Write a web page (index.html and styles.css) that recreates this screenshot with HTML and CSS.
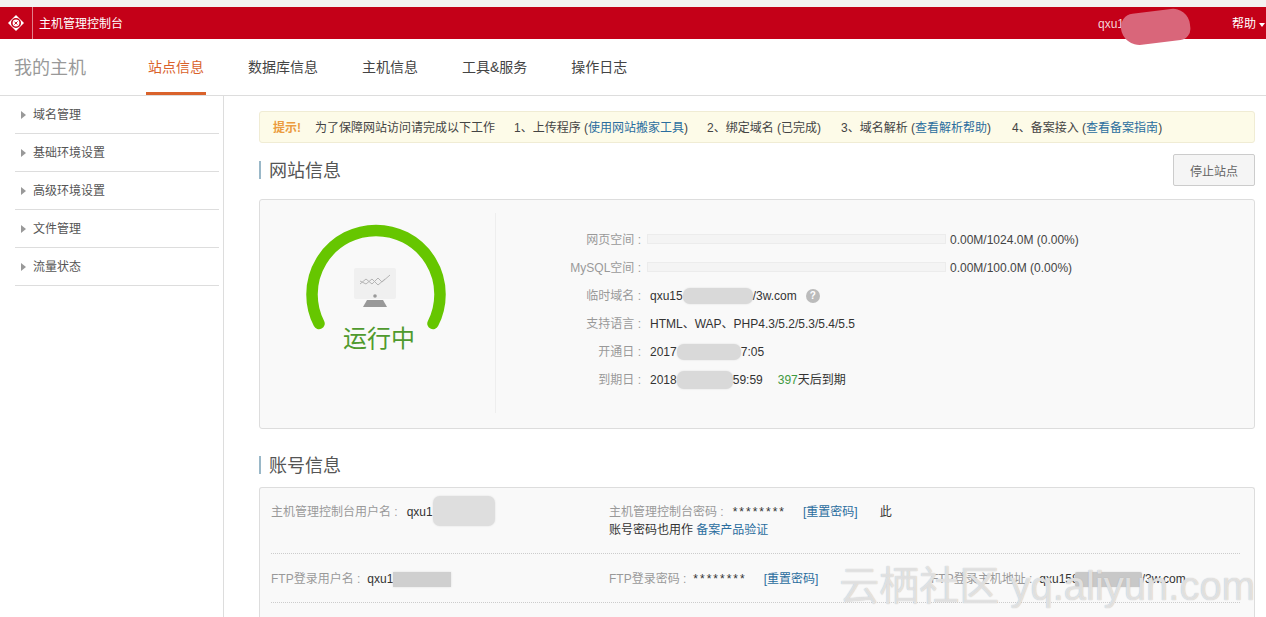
FILE: index.html
```html
<!DOCTYPE html>
<html lang="en">
<head>
	<meta charset="UTF-8">
	<title>主机管理控制台</title>
	<link rel="stylesheet" href="styles.css">
</head>
<body>
	<div class="topbar">
		<div class="logo">
			<svg width="16" height="16" viewBox="0 0 16 16">
				<path d="M8 0L16 8L8 16L0 8Z" fill="#fff"/>
				<circle cx="8" cy="8" r="4.2" fill="none" stroke="#c40018" stroke-width="1.6"/>
				<path d="M6.4 9.6L9.6 6.4M6.4 6.6L9.4 9.6" stroke="#c40018" stroke-width="1"/>
			</svg>
		</div>
		<div class="topbar-title">主机管理控制台</div>
		<div class="user">qxu1</div>
		<div class="help">帮助<i class="caret"></i></div>
		<div class="smudge"></div>
	</div>

	<div class="nav">
		<div class="nav-title">我的主机</div>
		<ul class="tabs">
			<li class="on">站点信息</li>
			<li>数据库信息</li>
			<li>主机信息</li>
			<li>工具&amp;服务</li>
			<li>操作日志</li>
		</ul>
	</div>

	<div class="wrap">
		<ul class="side">
			<li>域名管理</li>
			<li>基础环境设置</li>
			<li>高级环境设置</li>
			<li>文件管理</li>
			<li>流量状态</li>
		</ul>

		<div class="main">
			<div class="notice">
				<b>提示!</b>
				<span>为了保障网站访问请完成以下工作</span>
				<span>1、上传程序 (<a>使用网站搬家工具</a>)</span>
				<span>2、绑定域名 (已完成)</span>
				<span>3、域名解析 (<a>查看解析帮助</a>)</span>
				<span>4、备案接入 (<a>查看备案指南</a>)</span>
			</div>

			<div class="head">
				<h2>网站信息</h2>
				<button class="btn">停止站点</button>
			</div>
			<div class="panel site">
				<div class="state">
					<svg class="gauge" width="140" height="108" viewBox="0 0 140 108">
						<path d="M13 99.5A64 64 0 1 1 127 99.5" fill="none" stroke="#66c600" stroke-width="11.5" stroke-linecap="round"/>
						<rect x="48" y="44" width="42" height="31" rx="2" fill="#f0f0f0"/>
						<path d="M54 60L60 55L66 60L72 54L76 58L84 51M54 57L60 60L66 55L72 61L79 55" fill="none" stroke="#b5b5b5" stroke-width="1"/>
						<circle cx="69" cy="72" r="1.8" fill="#999"/>
						<path d="M61 76H77L81 83H57Z" fill="#999"/>
					</svg>
					<div class="state-text">运行中</div>
				</div>
				<div class="info">
					<div class="row"><label>网页空间 :</label><div class="bar"></div><span class="usage">0.00M/1024.0M (0.00%)</span></div>
					<div class="row"><label>MySQL空间 :</label><div class="bar"></div><span class="usage">0.00M/100.0M (0.00%)</span></div>
					<div class="row"><label>临时域名 :</label>qxu15<i class="mask m1"></i>/3w.com<i class="tip">?</i></div>
					<div class="row"><label>支持语言 :</label>HTML、WAP、PHP4.3/5.2/5.3/5.4/5.5</div>
					<div class="row"><label>开通日 :</label>2017<i class="mask m2"></i>7:05</div>
					<div class="row"><label>到期日 :</label>2018<i class="mask m3"></i>59:59<em>397</em>天后到期</div>
				</div>
			</div>

			<div class="head head2">
				<h2>账号信息</h2>
			</div>
			<div class="panel account">
				<div class="acc-row">
					<div><label>主机管理控制台用户名 :</label>qxu1<i class="mask m4"></i></div>
					<div class="acc-wide">
						<div><label>主机管理控制台密码 :</label><span class="pwd">********</span><a>[重置密码]</a><span class="this">此</span></div>
						<div>账号密码也用作 <a class="plain">备案产品验证</a></div>
					</div>
				</div>
				<div class="acc-row short">
					<div><label>FTP登录用户名 :</label>qxu1<i class="mask m5"></i></div>
					<div><label>FTP登录密码 :</label><span class="pwd">********</span><a>[重置密码]</a></div>
					<div><label>FTP登录主机地址 :</label>qxu158<i class="mask m6"></i>/3w.com</div>
				</div>
			</div>
		</div>
	</div>

	<div class="watermark">云栖社区 yq.aliyun.com</div>
</body>
</html>
```

FILE: styles.css
```css
*{
	margin:0;
	padding:0;
	box-sizing:border-box;
}
html,body{
	height:100%;
	overflow:hidden;
}
body{
	position:relative;
	font:12px/18px "Liberation Sans","Noto Sans CJK SC",sans-serif;
	color:#333;
	background:#fff;
	border-top:7px solid #f3f2f2;
}
ul{
	list-style:none;
}
i,em{
	font-style:normal;
}
a{
	color:#2a6d9e;
}

/* 顶部红条 */
.topbar{
	display:flex;
	align-items:center;
	height:32px;
	background:#c40018;
	color:#fff;
}
.logo{
	display:flex;
	align-items:center;
	justify-content:center;
	width:33px;
	height:32px;
	border-right:1px solid #e2808c;
}
.topbar-title{
	margin-left:6px;
	padding-top:2px;
	flex:1;
}
.user{
	width:134px;
	padding-top:2px;
	color:#f4d3d6;
}
.help{
	width:34px;
	padding-top:2px;
	white-space:nowrap;
}
.caret{
	display:inline-block;
	margin-left:3px;
	border:3.5px solid transparent;
	border-top:4px solid #fff;
	border-bottom:0;
	vertical-align:middle;
}
.smudge{
	position:absolute;
	left:1121px;
	top:4px;
	width:69px;
	height:32px;
	border-radius:14px 18px 12px 20px;
	background:#d9667a;
	transform:rotate(-7deg);
}

/* 二级导航 */
.nav{
	display:flex;
	height:57px;
	border-bottom:1px solid #ddd;
}
.nav-title{
	width:146px;
	padding-left:14px;
	font-size:18px;
	line-height:58px;
	color:#999;
}
.tabs{
	display:flex;
}
.tabs li{
	height:56px;
	margin-right:44px;
	font-size:14px;
	line-height:56px;
	color:#444;
}
.tabs .on{
	color:#d9622b;
	width:60px;
	padding-left:2px;
	margin-right:42px;
	border-bottom:3px solid #d9622b;
}

.wrap{
	display:flex;
	height:521px;
}

/* 左侧菜单 */
.side{
	width:224px;
	flex:none;
	padding:0 4px 0 15px;
	border-right:1px solid #ddd;
}
.side li{
	position:relative;
	height:38px;
	padding-left:18px;
	line-height:39px;
	border-bottom:1px solid #ddd;
	color:#555;
}
.side li:before{
	content:"";
	position:absolute;
	left:6px;
	top:15px;
	border:4px solid transparent;
	border-left:5px solid #999;
	border-right:0;
}

.main{
	flex:1;
	padding:15px 11px 0 35px;
}
.notice{
	display:flex;
	align-items:center;
	gap:19px;
	height:32px;
	padding:2px 0 0 13px;
	border:1px solid #f0ecd4;
	border-radius:3px;
	background:#fdfbe8;
	color:#444;
}
.notice b{
	color:#eb9c3f;
	margin-right:-5px;
}
.notice span + span + span + span{
	margin-left:1px;
}
.notice span:last-child{
	margin-left:2px;
}
.head{
	display:flex;
	justify-content:space-between;
	align-items:center;
	height:32px;
	margin:11px 0 13px;
}
.head2{
	margin:20px 0 6px;
}
.head h2{
	height:18px;
	padding-left:8px;
	border-left:2px solid #9ab8c8;
	font-size:18px;
	font-weight:normal;
	line-height:20px;
	color:#555;
}
.btn{
	width:82px;
	height:32px;
	border:1px solid #ccc;
	border-radius:2px;
	background:#f5f5f5;
	font:12px "Liberation Sans","Noto Sans CJK SC",sans-serif;
	color:#666;
}
.panel{
	border:1px solid #ddd;
	border-radius:3px;
	background:#f9f9f9;
}

/* 站点信息 */
.site{
	display:flex;
	height:230px;
	padding-top:13px;
}
.state{
	width:236px;
	height:200px;
	padding-top:11px;
	border-right:1px solid #eee;
	text-align:center;
}
.gauge{
	display:block;
	margin-left:46px;
}
.state-text{
	margin:-8px 0 0 3px;
	font-size:24px;
	line-height:30px;
	color:#4f9a2e;
}
.info{
	padding-top:12px;
	color:#333;
}
.row{
	display:flex;
	align-items:center;
	height:28px;
	padding-top:2px;
}
.row label{
	width:145px;
	margin-right:9px;
	text-align:right;
	color:#999;
}
.bar{
	width:299px;
	height:10px;
	margin:-2px 4px 0 -3px;
	background:#f4f4f4;
	border:1px solid #ececec;
}
.usage{
	color:#444;
}
.row em{
	margin-left:15px;
	color:#3f9a3f;
}
.tip{
	width:14px;
	height:14px;
	margin-left:9px;
	border-radius:50%;
	background:#bbb;
	color:#fff;
	font-size:10px;
	font-weight:bold;
	line-height:14px;
	text-align:center;
}

/* 打码色块 */
.mask{
	display:inline-block;
	flex:none;
	background:#d9d9d9;
	border-radius:7px;
	box-shadow:0 0 2px #ddd;
}
.m1{
	width:70px;
	height:16px;
}
.m2{
	width:64px;
	height:16px;
}
.m3{
	width:56px;
	height:18px;
}
.m4{
	width:62px;
	height:30px;
	margin:-20px 0 -10px;
	background:#dedede;
}
.m5{
	width:58px;
	height:15px;
	border-radius:0;
	vertical-align:middle;
	background:#cfcfcf;
}
.m6{
	width:67px;
	height:15px;
	margin-left:-4px;
	border-radius:2px;
	vertical-align:middle;
	background:#c8c8c8;
}

/* 账号信息 */
.account{
	height:130px;
	padding:0 14px 0 11px;
	border-bottom:0;
	border-radius:3px 3px 0 0;
}
.acc-row{
	display:grid;
	grid-template-columns:338px 322px 1fr;
	padding:15px 0 14px;
	border-bottom:1px dotted #ccc;
}
.acc-row + .acc-row{
	padding:16px 0 14px;
}
.acc-wide{
	grid-column:2 / 4;
}
.acc-row label{
	margin-right:9px;
	color:#999;
}
.short label{
	margin-right:7px;
}
.pwd{
	letter-spacing:2px;
}
.acc-row a{
	margin-left:17px;
}
.acc-row a.plain{
	margin-left:0;
}
.this{
	margin-left:22px;
}

.watermark{
	position:absolute;
	right:11px;
	top:555px;
	font-size:40px;
	line-height:48px;
	white-space:nowrap;
	color:rgba(255,255,255,.65);
	text-shadow:0 0 1px #aaa;
}
```
